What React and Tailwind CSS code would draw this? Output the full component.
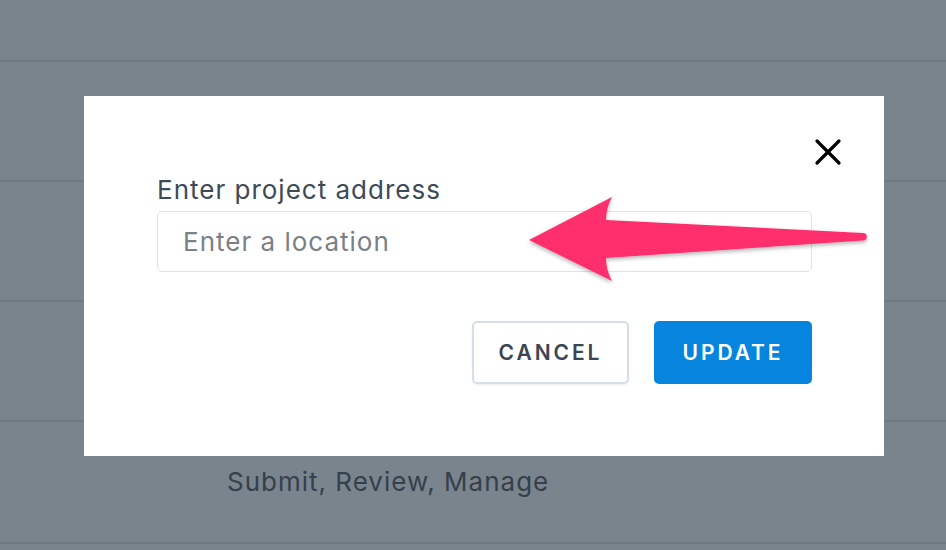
import { X } from "lucide-react";

const rows = [
  { id: "r0", h: "h-[62px]" },
  { id: "r1", h: "h-[120px]" },
  { id: "r2", h: "h-[120px]" },
  { id: "r3", h: "h-[120px]" },
  { id: "r4", h: "h-[122px]", label: "Submit, Review, Manage" },
];

const App = () => {
  return (
    <div
      className="relative w-[946px] h-[550px] overflow-hidden bg-[#7a848d]"
      style={{ fontFamily: "Inter, 'Noto Sans', sans-serif" }}
    >
      {/* Page behind the overlay */}
      <div className="flex flex-col">
        {rows.map((row) => (
          <div
            key={row.id}
            className={`${row.h} border-b-2 border-[#6e7a83] flex items-start`}
          >
            {row.label && (
              <p className="pl-[227px] pt-[47px] text-[26px] leading-none tracking-[1px] text-[#34404b]">
                {row.label}
              </p>
            )}
          </div>
        ))}
      </div>

      {/* Modal */}
      <div className="absolute left-[84px] top-[96px] w-[800px] h-[360px] bg-white">
        <div className="flex justify-end pt-[34px] pr-[34px] h-[78px]">
          <button className="text-black h-[44px]">
            <X size={44} strokeWidth={1.75} />
          </button>
        </div>
        <div className="pl-[73px] pr-[72px] mt-[1px]">
          <label className="block text-[26px] leading-[30px] tracking-[1px] text-[#3d4a57]">
            Enter project address
          </label>
          <div className="mt-[6px] h-[61px] border border-[#dde3ea] rounded-[5px] flex items-center px-[25px]">
            <span className="text-[26px] tracking-[1px] text-[#7b8087]">Enter a location</span>
          </div>
          <div className="flex justify-end gap-[25px] mt-[49px]">
            <button className="w-[157px] h-[63px] border-2 border-[#d6dfe7] rounded-[5px] text-[21px] font-semibold tracking-[0.14em] text-[#3a4652] shadow-[0_2px_2px_rgba(0,0,0,0.05)]">
              CANCEL
            </button>
            <button className="w-[158px] h-[63px] bg-[#0784de] rounded-[5px] text-[21px] font-semibold tracking-[0.14em] text-white">
              UPDATE
            </button>
          </div>
        </div>
      </div>

      {/* Annotation arrow */}
      <svg
        className="absolute inset-0 pointer-events-none"
        width="946"
        height="550"
        viewBox="0 0 946 550"
      >
        <defs>
          <filter id="sh" x="-10%" y="-30%" width="120%" height="160%">
            <feDropShadow dx="0" dy="2" stdDeviation="2" floodColor="#000" floodOpacity="0.3" />
          </filter>
        </defs>
        <path
          d="M529 240 L612 197 Q606 208 606 220 L863 233 A3.6 3.6 0 0 1 863 240.5 L606 258 Q606 270 612 281 Z"
          fill="#ff2d6c"
          filter="url(#sh)"
        />
      </svg>
    </div>
  );
};

export default App;
